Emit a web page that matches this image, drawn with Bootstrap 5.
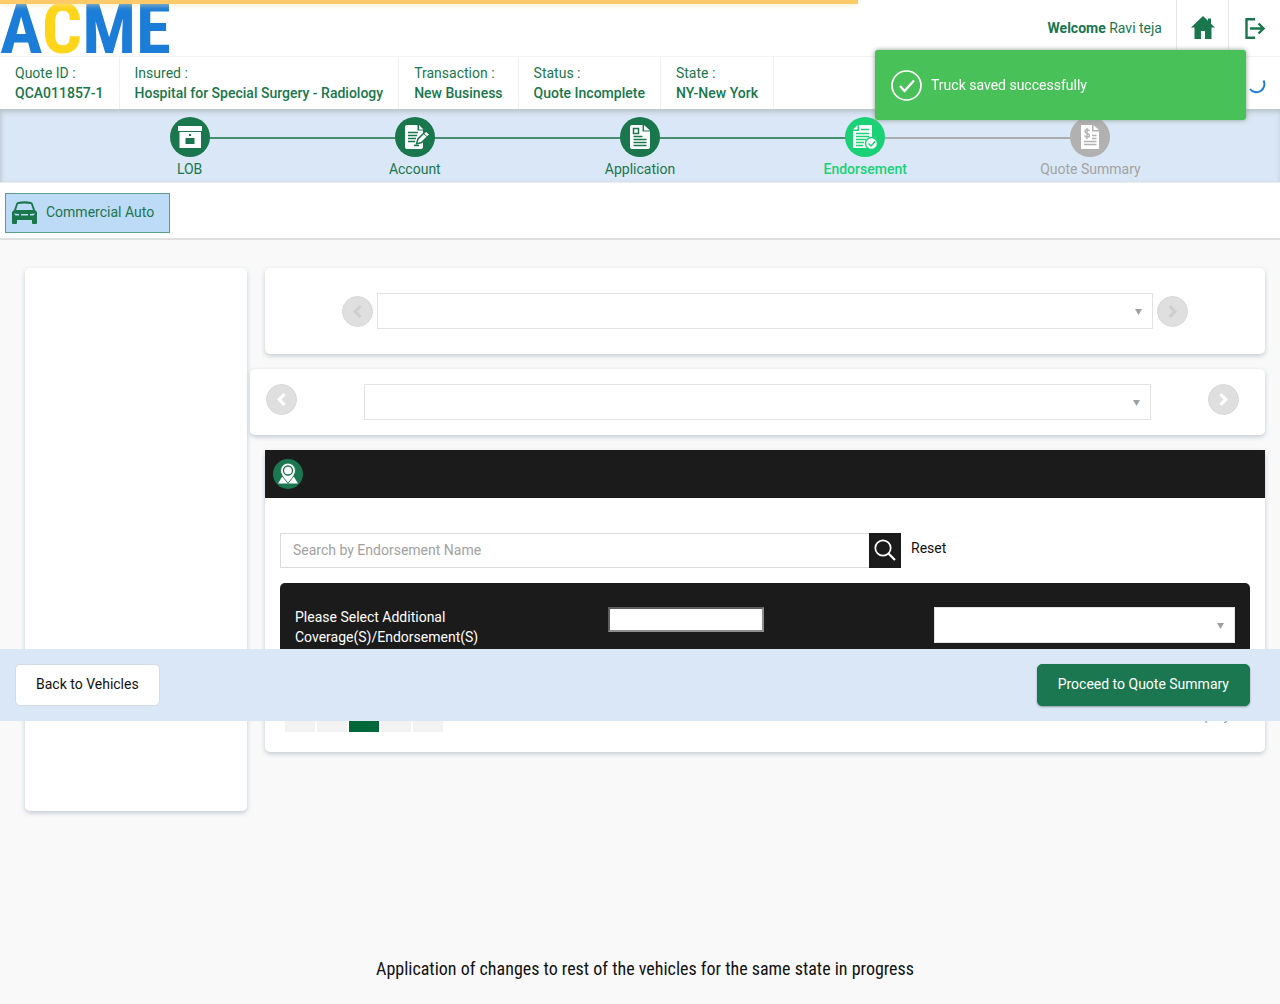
<!DOCTYPE html>
<html lang="en">
<head>
<meta charset="utf-8">
<meta name="viewport" content="width=device-width, initial-scale=1">
<title>ACME - Endorsement</title>
<link href="https://cdn.jsdelivr.net/npm/bootstrap@5.3.0/dist/css/bootstrap.min.css" rel="stylesheet">
<style>
:root { --brand: #19764d; --ink: #1b1b1b; --pale: #dae7f6; }
body { font-family: Roboto, "Liberation Sans", sans-serif; font-size: 14px; line-height: 20px; color: #111; background: #f9f9f9; }
.fw-mid { font-weight: 500; }
.brand-ink { color: var(--brand); }
.load-bar { height: 4px; background: #ffcb69; z-index: 1080; box-shadow: 0 0 6px #ffe2a8; }
.top-bar { height: 57px; border-bottom: 1px solid #f3f3f3; }
.logo { font-family: "Roboto Condensed", Roboto, sans-serif; font-weight: 700; font-size: 71px; line-height: 57px; color: #1b7dd8; text-decoration: none; }
.logo span { color: #ffd51a; }
.welcome { margin-right: 14px; }
.top-cell { width: 52px; border-left: 1px solid #e6e6e6; color: var(--brand); }
.info-cell { padding: 6px 15px; border-right: 1px solid #f0f0f0; }
.steps { background: var(--pale); padding: 8px 77px 3px; box-shadow: inset 0 4px 5px -1px #b9c3cb, inset 3px 0 5px -2px #c3ccd6; border-bottom: 1px solid #e9eef3; }
.step { flex: 1 1 0; position: relative; text-align: center; color: var(--brand); text-decoration: none; }
.step svg { display: block; margin: 0 auto 2px; position: relative; z-index: 1; }
.step + .step::before { content: ""; position: absolute; top: 20px; left: -50%; width: 100%; height: 2px; background: #458f70; }
.step.current { color: #1bd176; font-weight: 500; }
.step.later { color: #a3a3a3; }
.step.later::before { background: #acacb0 !important; }
.tab-bar { padding: 10px 5px 5px; border-bottom: 2px solid #e0e0e0; }
.lob-tab { height: 40px; gap: 9px; padding: 0 15px 2px 6px; background: #bddaf6; border: 1px solid #5c9f88; color: var(--brand); text-decoration: none; }
.work { padding: 28px 15px 0 25px; gap: 18px; }
.side { width: 222px; height: 543px; flex: none; }
.panel { background: #fff; border-radius: 5px; box-shadow: 0 2px 5px #c3cbd3; }
.stack { gap: 15px; min-width: 0; }
.pick-first { padding: 25px 77px; gap: 4px; }
.pick-second { margin-left: -15px; padding: 15px 26px 15px 16px; }
.pick-second select { margin: 0 57px 0 67px; }
.round-btn { width: 31px; height: 31px; flex: none; padding: 0; border: 1px solid #d8d8d8; border-radius: 50%; background: #dfdfdf; color: #fff; }
.round-btn.faint { color: #cfcfcf; }
.round-btn svg { display: block; margin: auto; }
.pick { display: block; width: 100%; min-width: 0; height: 36px; appearance: none; border: 1px solid #e3e3e3; border-radius: 0; background: #fff url("data:image/svg+xml,%3Csvg xmlns='http://www.w3.org/2000/svg' width='7' height='6'%3E%3Cpath d='M0 0h7L3.500 6z' fill='%239da1a7'/%3E%3C/svg%3E") no-repeat right 10px top 15px; }
.head-strip { height: 48px; padding: 0 8px; background: var(--ink); }
.list-body { padding: 35px 15px 20px; }
.find-box { width: 589px; height: 35px; padding: 0 12px 2px; border: 1px solid #dcdcdc; border-right: 0; color: #333; min-width: 0; }
.find-box::placeholder { color: #a2a2a2; opacity: 1; }
.find-btn { width: 32px; height: 35px; padding: 0 0 2px; border: 0; background: var(--ink); color: #fff; }
.reset-btn { margin-left: 10px; padding: 5px 0; border: 0; background: none; color: #111; }
.cover { margin-top: 15px; padding: 24px 15px; border-radius: 5px; background: var(--ink); color: #fff; }
.cover-label { max-width: 200px; }
.cover-text { width: 156px; height: 25px; border: 2px solid; border-color: #5e5e5e #8e8e8e #8e8e8e #5e5e5e; background: #fff; }
.cover-pick { width: 301px; }
.pager { margin: 31px 20px 0 5px; gap: 2px; }
.pager button { width: 30px; height: 30px; padding: 0 0 4px; border: 0; background: #f2f2f2; color: #c9c9c9; }
.pager button.on { background: #00683a; color: #fff; }
.pager span { padding-bottom: 5px; color: #96a0a8; }
.foot-bar { bottom: 283px; height: 72px; padding: 0 30px 0 15px; background: var(--pale); z-index: 1020; }
.foot-btn { height: 42px; padding: 0 20px 2px; border: 1px solid #d4dae1; border-radius: 5px; font-size: 14px; line-height: 20px; background: #fff; color: #111; }
.foot-btn.go { background: #1b774f; border-color: #1b774f; color: #fff; box-shadow: 0 1px 2px #8d9ba3; }
.saved { top: 50px; right: 34px; width: 371px; height: 70px; padding: 0 16px; gap: 9px; border-radius: 3px; background: #49c159; color: #fff; box-shadow: 0 0 5px #8b9a8e; z-index: 1070; }
.spin { top: 76px; right: 14px; z-index: 1060; }
.wait-note { margin: 147px 0 24px 10px; font-family: "Roboto Condensed", Roboto, sans-serif; font-size: 18px; line-height: 22px; text-align: center; }
</style>
<script src="https://cdn.jsdelivr.net/npm/bootstrap@5.3.0/dist/js/bootstrap.bundle.min.js"></script>
</head>
<body>
<div class="load-bar position-fixed top-0 start-0" style="width:67%"></div>

<header class="bg-white">
  <div class="top-bar d-flex">
    <a class="logo me-auto" href="#">A<span>C</span>ME</a>
    <div class="welcome brand-ink align-self-center"><span class="fw-bold">Welcome</span> Ravi teja</div>
    <a class="top-cell d-flex align-items-center justify-content-center" href="#" aria-label="Home">
      <svg width="24" height="24" viewBox="0 0 24 24" fill="currentColor"><path d="M12 0 0 11.500h3.500V23h6.500v-8h4v8h6.500V11.500H24L20 7.700V2.500h-3v2.300z"/></svg>
    </a>
    <a class="top-cell d-flex align-items-center justify-content-center" href="#" aria-label="Log out">
      <svg width="20" height="22" viewBox="0 0 20 22" fill="none" stroke="currentColor" stroke-width="2.400"><path d="M10 2.200H1.500v18.500H10M5 11.500h13M13.500 6.500l5 5-5 5"/></svg>
    </a>
  </div>
  <div class="d-flex brand-ink">
    <div class="info-cell">Quote ID :<div class="fw-mid">QCA011857-1</div></div>
    <div class="info-cell">Insured :<div class="fw-mid">Hospital for Special Surgery - Radiology</div></div>
    <div class="info-cell">Transaction :<div class="fw-mid">New Business</div></div>
    <div class="info-cell">Status :<div class="fw-mid">Quote Incomplete</div></div>
    <div class="info-cell">State :<div class="fw-mid">NY-New York</div></div>
  </div>
</header>

<nav class="steps d-flex" aria-label="Quote steps">
  <a class="step" href="#">
    <svg width="40" height="40" viewBox="0 0 40 40"><circle cx="20" cy="20" r="20" fill="#19764d"/><path d="M8 9h24v5H8zM9.500 15h21.500v16H9.500z" fill="#fff"/><path d="M15.500 21h9v6h-9zM19 17h2v2h-2z" fill="#19764d"/></svg>LOB</a>
  <a class="step" href="#">
    <svg width="40" height="40" viewBox="0 0 40 40"><circle cx="20" cy="20" r="20" fill="#19764d"/><path d="M12 8h10.500v5.500H28V30q0 2-2 2H12q-2 0-2-2V10q0-2 2-2zM24 8l4.500 4.500H24z" fill="#fff"/><path d="M13 15.500h10M13 18.500h9M13 21.500h8M13 24.500h7M19 28.500h5" stroke="#19764d" stroke-width="1.500"/><path d="M21.500 27l1.500-5 8-8 4 3.500-8.500 8z" fill="#fff" stroke="#19764d" stroke-width="1.500"/><path d="M28.500 16.500l4 3.500" stroke="#19764d"/></svg>Account</a>
  <a class="step" href="#">
    <svg width="40" height="40" viewBox="0 0 40 40"><circle cx="20" cy="20" r="20" fill="#19764d"/><path d="M12 8h10.500v6.500H30V30q0 2-2 2H12q-2 0-2-2V10q0-2 2-2zM24 8l6 5.500h-6z" fill="#fff"/><path d="M13.500 11.500h5v5h-5zM13.500 19.500h9M13.500 22.500h13M13.500 25.500h13M13.500 28.500h13" fill="none" stroke="#19764d" stroke-width="1.500"/></svg>Application</a>
  <a class="step current" href="#" aria-current="step">
    <svg width="40" height="40" viewBox="0 0 40 40"><circle cx="20" cy="20" r="20" fill="#1bd176"/><path d="M14 8h13v23H8V14h6zM12.500 8v4.500H8z" fill="#fff"/><path d="M16 12.500h8M11 16.500h13M11 19.500h13M11 22.500h10M11 25.500h8M11 28.500h7" stroke="#1bd176" stroke-width="1.500"/><circle cx="26.500" cy="26.500" r="6" fill="#fff" stroke="#1bd176" stroke-width="1.500"/><path d="M23.500 26.500l2.500 2.500 4-4.500" fill="none" stroke="#1bd176" stroke-width="1.500"/></svg>Endorsement</a>
  <a class="step later" href="#">
    <svg width="40" height="40" viewBox="0 0 40 40"><circle cx="20" cy="20" r="20" fill="#b1b1b1"/><path d="M11 8h11v6.500h7V32H11zM23.500 8l5.500 5h-5.500z" fill="#fff"/><path d="M19.500 14c-1-2-5-1.500-4.500.7.400 2 4.500 1.500 4.500 3.800 0 2-4 2-5 0M17 11v11M22 18.500h4.500M22 21.500h4.500M14 24.500h12.500M14 27.500h12.500" fill="none" stroke="#b1b1b1" stroke-width="1.400"/></svg>Quote Summary</a>
</nav>

<div class="tab-bar bg-white d-flex">
  <a class="lob-tab d-flex align-items-center" href="#">
    <svg width="25" height="23" viewBox="0 0 25 23" fill="currentColor"><path fill-rule="evenodd" d="M6 1q6.500-1.500 13 0l1.500 1L23 9l2 2v11q0 1-1 1h-3q-1 0-1-1v-3H5v3q0 1-1 1H1q-1 0-1-1V11l2-2 2.500-7zM6 3 4 9h17l-2-6q-6.500-1-13 0zM2 12.500l1.500 2H7v-1.500zM9 13v1.500h7V13zM23 12.500l-5 .5v1.500h3.500z"/></svg>
    Commercial Auto
  </a>
</div>

<main class="work d-flex align-items-start">
  <aside class="side panel"></aside>
  <div class="stack d-flex flex-column flex-grow-1">
    <section class="panel pick-first d-flex align-items-center">
      <button class="round-btn faint" type="button" aria-label="Previous location" disabled><svg width="11" height="13" viewBox="0 0 11 13" fill="none" stroke="currentColor" stroke-width="3.200"><path d="M8.500 1.200 3.200 6.500l5.300 5.300"/></svg></button>
      <select class="pick" aria-label="Location"><option></option></select>
      <button class="round-btn faint" type="button" aria-label="Next location" disabled><svg width="11" height="13" viewBox="0 0 11 13" fill="none" stroke="currentColor" stroke-width="3.200"><path d="M2.500 1.200 7.800 6.500l-5.300 5.300"/></svg></button>
    </section>
    <section class="panel pick-second d-flex">
      <button class="round-btn" type="button" aria-label="Previous vehicle"><svg width="11" height="13" viewBox="0 0 11 13" fill="none" stroke="currentColor" stroke-width="3.200"><path d="M8.500 1.200 3.200 6.500l5.300 5.300"/></svg></button>
      <select class="pick" aria-label="Vehicle"><option></option></select>
      <button class="round-btn" type="button" aria-label="Next vehicle"><svg width="11" height="13" viewBox="0 0 11 13" fill="none" stroke="currentColor" stroke-width="3.200"><path d="M2.500 1.200 7.800 6.500l-5.300 5.300"/></svg></button>
    </section>
    <section class="panel">
      <div class="head-strip d-flex align-items-center">
        <svg width="30" height="30" viewBox="0 0 30 30"><circle cx="15" cy="15" r="15" fill="#1b774f"/><path d="M5 24.500 9 18h12l4 6.500z" fill="#fff"/><path d="M15 24.500C12 20 7.500 16.500 7.500 11.500a7.500 7.500 0 0 1 15 0c0 5-4.500 8.500-7.500 13z" fill="#fff" stroke="#1b774f"/><circle cx="15" cy="11.500" r="4.500" fill="#fff" stroke="#1b774f" stroke-width="1.300"/></svg>
      </div>
      <div class="list-body">
        <form class="d-flex align-items-start">
          <input class="find-box" type="text" aria-label="Search by Endorsement Name" placeholder="Search by Endorsement Name">
          <button class="find-btn" type="button" aria-label="Search"><svg width="22" height="22" viewBox="0 0 22 22" fill="none" stroke="currentColor" stroke-width="1.700"><circle cx="9" cy="9" r="7.700"/><path d="m14.500 14.500 6.500 6.500" stroke-width="2.200"/></svg></button>
          <button class="reset-btn" type="reset">Reset</button>
        </form>
        <div class="cover">
          <div class="row g-0">
            <div class="col-4"><label class="cover-label" for="coverName">Please Select Additional Coverage(S)/Endorsement(S)</label></div>
            <div class="col-4"><input class="cover-text" id="coverName" type="text"></div>
            <div class="col-4"><div class="cover-pick ms-auto"><select class="pick" aria-label="Coverage"><option></option></select></div></div>
          </div>
        </div>
        <div class="pager d-flex align-items-center">
          <button type="button" aria-label="First page">«</button>
          <button type="button" aria-label="Previous page">‹</button>
          <button type="button" class="on">0</button>
          <button type="button" aria-label="Next page">›</button>
          <button type="button" aria-label="Last page">»</button>
          <span class="ms-auto">No items to display</span>
        </div>
      </div>
    </section>
  </div>
</main>

<p class="wait-note">Application of changes to rest of the vehicles for the same state in progress</p>

<div class="foot-bar position-fixed start-0 end-0 d-flex align-items-center justify-content-between">
  <button class="foot-btn" type="button">Back to Vehicles</button>
  <button class="foot-btn go" type="button">Proceed to Quote Summary</button>
</div>

<div class="saved position-fixed d-flex align-items-center" role="status">
  <svg width="31" height="31" viewBox="0 0 31 31" fill="none" stroke="#fff"><circle cx="15.500" cy="15.500" r="14.500" stroke-width="1.700"/><path d="m9 16 4.500 5L23 10.500" stroke-width="2.300"/></svg>
  Truck saved successfully
</div>
<svg class="spin position-fixed" width="18" height="18" viewBox="0 0 18 18" fill="none" stroke="#1b7dd8" stroke-width="2"><path d="M15.500 4.500A8 8 0 0 1 2 13"/></svg>
</body>
</html>
